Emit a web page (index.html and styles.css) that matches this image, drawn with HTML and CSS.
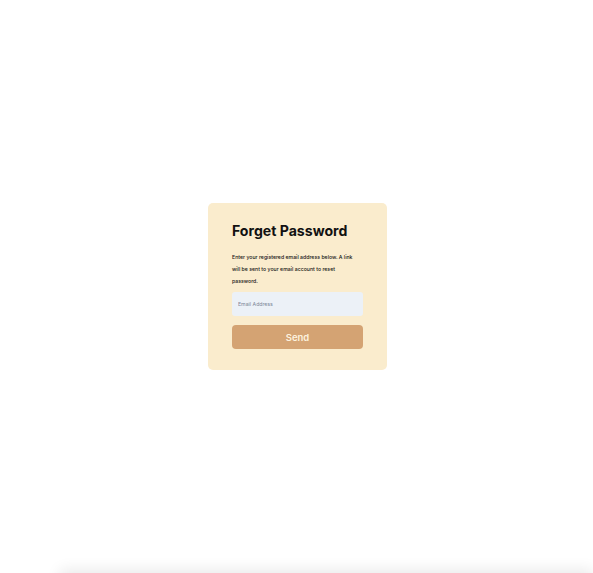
FILE: index.html
```html
<!DOCTYPE html>
<html lang="en">
<head>
<meta charset="utf-8">
<title>Forget Password</title>
<link rel="stylesheet" href="styles.css">
</head>
<body>
<main class="page">
  <form class="card">
    <h1 class="title">Forget Password</h1>
    <p class="desc">Enter your registered email address below. A link will be sent to your email account to reset password.</p>
    <input class="field" type="email" placeholder="Email Address">
    <button class="btn" type="button">Send</button>
  </form>
</main>
<footer class="footer"></footer>
</body>
</html>
```
FILE: styles.css
```css
html, body {
  margin: 0;
  padding: 0;
  background: #ffffff;
  font-family: Inter, "Noto Sans", sans-serif;
}
.page {
  height: 100vh;
  display: flex;
  align-items: center;
  justify-content: center;
  padding-left: 2px;
  box-sizing: border-box;
}
.card {
  width: 131px;
  padding: 19px 24px 21px;
  background: #faeccd;
  border-radius: 5px;
  display: flex;
  flex-direction: column;
}
.title {
  margin: 0;
  font-size: 14.1px;
  line-height: 18px;
  font-weight: 700;
  color: #111111;
  letter-spacing: 0;
}
.desc {
  zoom: 0.5;
  width: 244px;
  margin: 22px 0 0;
  font-size: 10.4px;
  font-weight: 500;
  line-height: 24px;
  color: #141414;
}
.field {
  margin: 5.5px 0 0;
  height: 24px;
  box-sizing: border-box;
  border: none;
  border-radius: 3px;
  background: #ecf1f7;
  padding: 0 6px;
  font-family: Inter, "Noto Sans", sans-serif;
  font-size: 5.2px;
  outline: none;
}
.field::placeholder {
  color: #7d8797;
}
.btn {
  margin-top: 9px;
  height: 24px;
  border: none;
  border-radius: 4px;
  background: #d4a373;
  color: #fdf2df;
  font-family: Inter, "Noto Sans", sans-serif;
  font-size: 9.5px;
  font-weight: 600;
  padding: 0;
}
.footer {
  margin-left: 60px;
  height: 60px;
  background: #ffffff;
  box-shadow: 0 -3px 14px rgba(0, 0, 0, 0.09);
}
```
